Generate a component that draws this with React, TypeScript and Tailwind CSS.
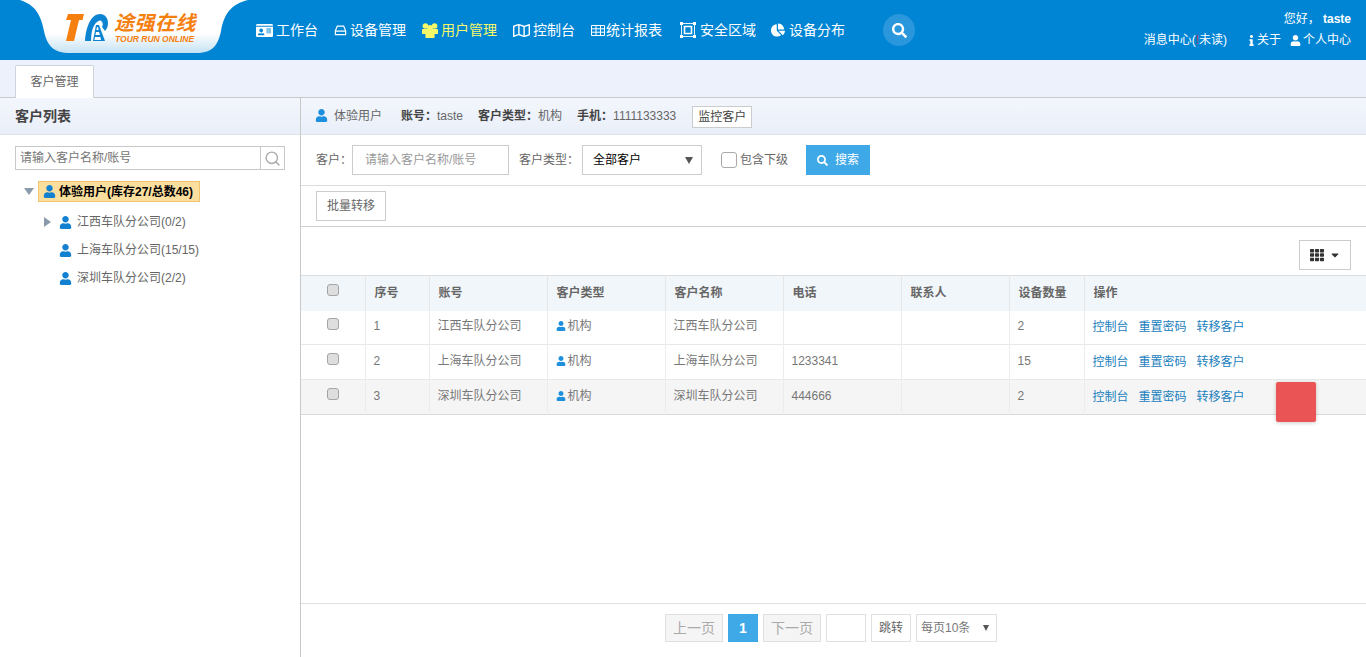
import {
  FaCaretDown,
  FaChartPie,
  FaIdCard,
  FaInfo,
  FaRegMap,
  FaSearch,
  FaTh,
  FaUser,
} from "react-icons/fa";
import { FiSearch } from "react-icons/fi";

const fontStack = "font-['Liberation_Sans','Noto_Sans_CJK_SC',sans-serif]";

function HddIcon() {
  return (
    <svg viewBox="0 0 14 12" className="h-[11px] w-[13px]" fill="none" stroke="currentColor" strokeWidth="1.3">
      <path d="M3.5 1.2 H10.5 L12.6 6.4 V10.6 H1.4 V6.4 Z M1.4 6.6 H12.6" />
    </svg>
  );
}

function UsersIcon() {
  return (
    <svg viewBox="0 0 16 15" className="h-[15px] w-[16px]" fill="currentColor">
      <circle cx="3.4" cy="3" r="2.8" />
      <circle cx="12.6" cy="3" r="2.8" />
      <circle cx="8" cy="5" r="3" />
      <path d="M1 6 H15 C15.6 6 16 6.4 16 7 V10.4 C16 10.8 15.7 11 15.4 11 H12.6 V14 C12.6 14.6 12.2 15 11.6 15 H4.4 C3.8 15 3.4 14.6 3.4 14 V11 H0.6 C0.3 11 0 10.8 0 10.4 V7 C0 6.4 0.4 6 1 6 Z" />
    </svg>
  );
}

function GridIcon() {
  return (
    <svg viewBox="0 0 14 11" className="h-[11px] w-[14px]" fill="none" stroke="currentColor" strokeWidth="1">
      <path d="M0.5 0.5 H13.5 V10.5 H0.5 Z M0.5 3.8 H13.5 M0.5 7.2 H13.5 M5 0.5 V10.5 M9.5 0.5 V10.5" />
    </svg>
  );
}

function AreaIcon() {
  return (
    <svg viewBox="0 0 16 16" className="h-[16px] w-[16px]" fill="none" stroke="currentColor">
      <path d="M1.5 1.5 H14.5 V14.5 H1.5 Z" strokeWidth="0.9" />
      <path d="M4.5 4.5 H11.5 V11.5 H4.5 Z" strokeWidth="1.6" />
      <g fill="currentColor" stroke="none">
        <rect x="0" y="0" width="3" height="3" />
        <rect x="13" y="0" width="3" height="3" />
        <rect x="0" y="13" width="3" height="3" />
        <rect x="13" y="13" width="3" height="3" />
      </g>
    </svg>
  );
}

const navItems = [
  { label: "工作台", icon: <FaIdCard className="text-[17px]" />, className: "gap-[3px]" },
  { label: "设备管理", icon: <HddIcon />, className: "gap-[3px]" },
  { label: "用户管理", icon: <UsersIcon />, className: "gap-[3px] text-[#f7f76a]" },
  { label: "控制台", icon: <FaRegMap className="text-[17px]" />, className: "gap-[3px]" },
  { label: "统计报表", icon: <GridIcon />, className: "mr-[2px] gap-[1px]" },
  { label: "安全区域", icon: <AreaIcon />, className: "gap-[4px]" },
  { label: "设备分布", icon: <FaChartPie className="text-[14px]" />, className: "-ml-[1px] gap-[4px]" },
];

const rows = [
  { no: 1, name: "江西车队分公司", phone: "", count: 2 },
  { no: 2, name: "上海车队分公司", phone: "1233341", count: 15 },
  { no: 3, name: "深圳车队分公司", phone: "444666", count: 2, hover: true },
];

function CheckBox() {
  return (
    <span className="inline-block h-[12px] w-[12px] rounded-[3px] border border-[#a5a5a5] bg-[#dedede]" />
  );
}

function Header() {
  return (
    <header className="flex h-[60px] flex-none items-center bg-[#0085d4] text-white">
      <div className="relative h-[60px] w-[256px] flex-none">
        {/* white tab behind the logo */}
        <svg viewBox="0 0 256 60" className="absolute left-0 top-0 h-[60px] w-[256px]">
          <defs>
            <linearGradient id="logoBg" x1="0" y1="0" x2="0" y2="1">
              <stop offset="0.62" stopColor="#ffffff" />
              <stop offset="1" stopColor="#c6e2f3" />
            </linearGradient>
          </defs>
          <path
            d="M20 0 C36 5 41 16 44 31 C47 46 54 53 70 53 L196 53 C212 53 218 46 221 31 C224 13 232 4 248 0 Z"
            fill="url(#logoBg)"
          />
        </svg>
        <svg viewBox="0 0 44 28" className="absolute left-[65px] top-[14px] h-[28px] w-[44px]">
          <path d="M3 0 H19 L17.5 6 H14 L9 27 H1 L6 6 H1 Z" fill="#f57f0f" />
          <path d="M20 27 C21 11 27 0 35 0 C40 0 43 4 43 9 C43 12 42 15 40 17 L37 13 C38 11 38 9 37 8 C36 6 34 6 32 8 C28 11 26 18 26 27 Z" fill="#0d84d2" />
          <path d="M31 11 L34 11 L40 27 H28 Z" fill="#0d84d2" />
          <path d="M32 13 L33 13 L33.6 16 H31.4 Z M31 18 H34 L35 21 H30.4 Z M30 23 H35.4 L36 26 H29.4 Z" fill="#ffffff" />
        </svg>
        <div className="absolute left-[114px] top-[11px] w-[86px] text-[#f57f0f]">
          <div className="text-[20px] font-bold italic leading-[24px] tracking-[0.5px]">途强在线</div>
          <div className="ml-[1px] whitespace-nowrap text-[8.5px] font-bold italic leading-[8px]">TOUR RUN ONLINE</div>
        </div>
      </div>

      <nav className="flex items-center gap-[16px] text-[14px]">
        {navItems.map((item) => (
          <a key={item.label} className={`flex items-center ${item.className}`}>
            {item.icon}
            <span>{item.label}</span>
          </a>
        ))}
      </nav>

      <div className="ml-[38px] flex h-[32px] w-[32px] items-center justify-center rounded-full bg-[#2a97dd]">
        <FaSearch className="text-[15px]" />
      </div>

      <div className="ml-auto flex flex-col items-end gap-[5px] pb-[1px] pr-[15px] text-[12px] leading-[16px]">
        <div>
          您好， <b>taste</b>
        </div>
        <div className="flex items-center">
          <span>
            消息中心(<span className="text-[#c0395a]">!</span>未读)
          </span>
          <span className="ml-[19px] flex items-center">
            <FaInfo className="text-[11px]" />
            关于
          </span>
          <span className="ml-[9px] flex items-center gap-[2px]">
            <FaUser className="text-[11px]" />
            个人中心
          </span>
        </div>
      </div>
    </header>
  );
}

function TreeRow({ label, arrow }: { label: string; arrow?: boolean }) {
  return (
    <div className="flex h-[28px] items-center text-[12px] text-[#666]">
      <span className="flex w-[15px] flex-none items-center">
        {arrow && <span className="h-0 w-0 border-y-[5px] border-l-[7px] border-y-transparent border-l-[#8c9bab]" />}
      </span>
      <FaUser className="mr-[5px] flex-none text-[13px] text-[#1381cf]" />
      <span>{label}</span>
    </div>
  );
}

function Sidebar() {
  return (
    <aside className="flex w-[301px] flex-none flex-col border-r border-[#c9c9c9]">
      <div className="flex h-[37px] flex-none items-center border-b border-[#dfe3ea] bg-[linear-gradient(#f3f6fc,#e9eff9)] pl-[15px] text-[14px] font-bold text-[#444]">
        客户列表
      </div>
      <div className="mx-[15px] mt-[11px] flex h-[24px] border border-[#c8c8c8]">
        <div className="flex flex-1 items-center pl-[4px] text-[12px] text-[#757575]">请输入客户名称/账号</div>
        <div className="flex w-[24px] items-center justify-center border-l border-[#c8c8c8] text-[#a9a9a9]">
          <FiSearch className="text-[17px]" />
        </div>
      </div>
      <div className="mt-[11px] pl-[24px]">
        <div className="flex h-[21px] items-center">
          <span className="mr-[4px] h-0 w-0 border-x-[5px] border-t-[7px] border-x-transparent border-t-[#8c9bab]" />
          <span className="flex h-[21px] items-center border border-[#f1c36c] bg-[#fbdf9f] pl-[4px] pr-[6px] text-[12px] font-bold text-black">
            <FaUser className="mr-[3px] text-[13px] text-[#1381cf]" />
            体验用户(库存27/总数46)
          </span>
        </div>
        <div className="mt-[6px] pl-[20px]">
          <TreeRow label="江西车队分公司(0/2)" arrow />
          <TreeRow label="上海车队分公司(15/15)" />
          <TreeRow label="深圳车队分公司(2/2)" />
        </div>
      </div>
    </aside>
  );
}

function CustomerTable() {
  return (
    <table className="w-full table-fixed border-collapse text-left text-[12px] text-[#777]">
      <colgroup>
        <col className="w-[64px]" />
        <col className="w-[64px]" />
        <col className="w-[118px]" />
        <col className="w-[118px]" />
        <col className="w-[118px]" />
        <col className="w-[118px]" />
        <col className="w-[108px]" />
        <col className="w-[75px]" />
        <col />
      </colgroup>
      <thead>
        <tr className="h-[35px] border-t border-[#dcdcdc] bg-[#f1f6fa] font-bold text-[#666]">
          <th className="border-r border-[#e6e6e6] pb-[3px] text-center font-normal">
            <CheckBox />
          </th>
          {["序号", "账号", "客户类型", "客户名称", "电话", "联系人", "设备数量", "操作"].map((h) => (
            <th key={h} className="border-r border-[#e6e6e6] pl-[9px] font-bold last:border-r-0">
              {h}
            </th>
          ))}
        </tr>
      </thead>
      <tbody>
        {rows.map((r) => (
          <tr
            key={r.no}
            className={`h-[35px] border-b border-[#e8e8e8] first:h-[34px] ${r.hover ? "bg-[#f5f5f5]" : "bg-white"} last:border-[#d8d8d8]`}
          >
            <td className="border-r border-[#ececec] pb-[3px] text-center">
              <CheckBox />
            </td>
            <td className="border-r border-[#ececec] pb-[3px] pl-[8px]">{r.no}</td>
            <td className="border-r border-[#ececec] pb-[3px] pl-[8px]">{r.name}</td>
            <td className="border-r border-[#ececec] pb-[3px] pl-[8px]">
              <span className="flex items-center gap-[2px]">
                <FaUser className="text-[10px] text-[#1e8fdc]" />
                机构
              </span>
            </td>
            <td className="border-r border-[#ececec] pb-[3px] pl-[8px]">{r.name}</td>
            <td className="border-r border-[#ececec] pb-[3px] pl-[8px]">{r.phone}</td>
            <td className="border-r border-[#ececec] pl-[8px]"></td>
            <td className="border-r border-[#ececec] pb-[3px] pl-[8px]">{r.count}</td>
            <td className="pb-[1px] pl-[8px] text-[#1a80bd]">
              <span className="flex gap-[10px]">
                <a>控制台</a>
                <a>重置密码</a>
                <a>转移客户</a>
              </span>
            </td>
          </tr>
        ))}
      </tbody>
    </table>
  );
}

function Pagination() {
  const box = "flex h-[28px] items-center justify-center border border-[#e0e0e0]";
  return (
    <div className="flex h-[54px] flex-none items-center justify-center border-t border-[#dfdfdf] pb-[5px] pr-[5px] text-[#aaa]">
      <div className={`${box} w-[58px] bg-[#f5f5f5] text-[14px]`}>上一页</div>
      <div className="ml-[5px] flex h-[28px] w-[30px] items-center justify-center bg-[#3fa9e8] text-[14px] font-bold text-white">1</div>
      <div className={`${box} ml-[5px] w-[58px] bg-[#f5f5f5] text-[14px]`}>下一页</div>
      <div className={`${box} ml-[5px] w-[40px]`} />
      <div className={`${box} ml-[5px] w-[40px] text-[12px] text-[#666]`}>跳转</div>
      <div className={`${box} ml-[5px] w-[81px] !justify-between pl-[4px] pr-[7px] text-[12px] text-[#777]`}>
        每页10条
        <span className="h-0 w-0 border-x-[3px] border-t-[6px] border-x-transparent border-t-[#555]" />
      </div>
    </div>
  );
}

function Main() {
  return (
    <main className="flex min-w-0 flex-1 flex-col">
      <div className="flex h-[37px] flex-none items-center border-b border-[#dfe3ea] bg-[linear-gradient(#f3f6fc,#e9eff9)] pl-[15px] text-[12px] text-[#666]">
        <FaUser className="mr-[6px] -translate-x-px -translate-y-px text-[13px] text-[#1e8fdc]" />
        <span className="-ml-px">体验用户</span>
        <b className="ml-[19px] text-[#444]">账号：</b>
        <span>taste</span>
        <b className="ml-[15px] text-[#444]">客户类型：</b>
        <span>机构</span>
        <b className="ml-[15px] text-[#444]">手机：</b>
        <span>1111133333</span>
        <span className="ml-[16px] mt-[2px] flex h-[22px] w-[60px] items-center justify-center border border-[#ccc] bg-white text-[#444]">
          监控客户
        </span>
      </div>

      <div className="flex h-[51px] flex-none items-center border-b border-[#dcdcdc] pl-[15px] text-[12px] text-[#666]">
        <span>客户：</span>
        <div className="flex h-[30px] w-[157px] items-center border border-[#ccc] pl-[12px] text-[#999]">
          请输入客户名称/账号
        </div>
        <span className="ml-[10px]">客户类型：</span>
        <div className="ml-[3px] flex h-[30px] w-[120px] items-center justify-between border border-[#ccc] pl-[10px] pr-[8px] text-black">
          全部客户
          <span className="h-0 w-0 border-x-[4px] border-t-[7px] border-x-transparent border-t-[#555]" />
        </div>
        <span className="ml-[19px] h-[16px] w-[16px] rounded-[3px] border border-[#aaa] bg-white" />
        <span className="ml-[3px]">包含下级</span>
        <button className="ml-[18px] flex h-[30px] w-[64px] items-center justify-center gap-[7px] bg-[#3fa9e8] text-white">
          <FaSearch className="text-[11px]" />
          搜索
        </button>
      </div>

      <div className="flex h-[41px] flex-none items-center border-b border-[#cfcfcf] pl-[15px]">
        <button className="h-[30px] w-[70px] border border-[#ccc] text-[12px] text-[#666]">批量转移</button>
      </div>

      <div className="flex h-[48px] flex-none items-center justify-end pr-[15px] pt-[7px]">
        <button className="flex h-[30px] w-[52px] items-center justify-center gap-[5px] border border-[#ccc] text-[#333]">
          <FaTh className="text-[14px]" />
          <FaCaretDown className="text-[12px]" />
        </button>
      </div>

      <div className="relative flex-1">
        <CustomerTable />
        {/* floating red block over the last row */}
        <div className="absolute left-[975px] top-[107px] h-[40px] w-[40px] rounded-[2px] bg-[#ea5455] shadow-[0_1px_4px_rgba(0,0,0,0.2)]" />
      </div>

      <Pagination />
    </main>
  );
}

export default function App() {
  return (
    <div className={`flex h-screen flex-col overflow-hidden bg-white ${fontStack}`}>
      <Header />
      <div className="flex h-[38px] flex-none items-end border-b border-[#c9c9c9] bg-[#edf1fb] pl-[15px]">
        <div className="-mb-px flex h-[33px] w-[79px] items-center justify-center rounded-t-[2px] border border-b-0 border-[#cfd3da] bg-white text-[12px] text-[#666]">
          客户管理
        </div>
      </div>
      <div className="flex min-h-0 flex-1">
        <Sidebar />
        <Main />
      </div>
    </div>
  );
}
